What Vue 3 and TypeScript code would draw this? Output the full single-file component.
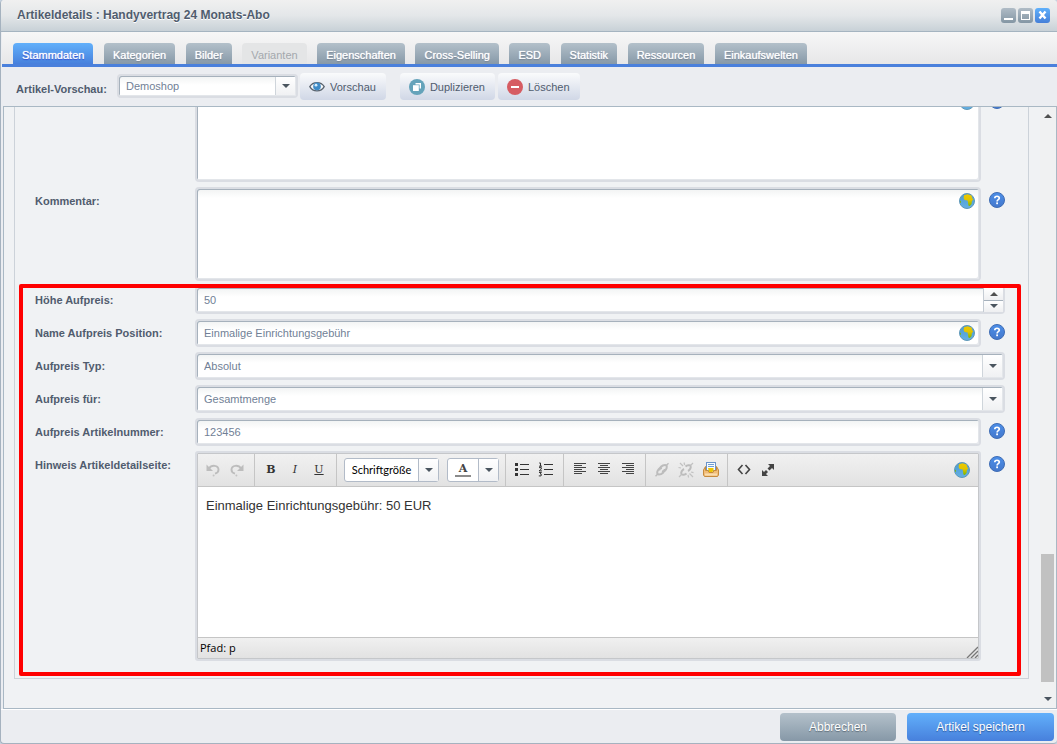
<script setup lang="ts">
import { ref } from 'vue'

interface Tab {
  name: string
  disabled?: boolean
}

const tabs: Tab[] = [
  { name: 'Stammdaten' },
  { name: 'Kategorien' },
  { name: 'Bilder' },
  { name: 'Varianten', disabled: true },
  { name: 'Eigenschaften' },
  { name: 'Cross-Selling' },
  { name: 'ESD' },
  { name: 'Statistik' },
  { name: 'Ressourcen' },
  { name: 'Einkaufswelten' },
]
const activeTab = ref('Stammdaten')

const shop = ref('Demoshop')
const description = ref('')
const comment = ref('')
const surcharge = ref('50')
const surchargeName = ref('Einmalige Einrichtungsgebühr')
const surchargeType = ref('Absolut')
const surchargeFor = ref('Gesamtmenge')
const surchargeNumber = ref('123456')

function step(delta: number) {
  surcharge.value = String(Number(surcharge.value) + delta)
}
</script>

<template>
  <div class="window">
    <svg class="defs" aria-hidden="true">
      <defs>
        <linearGradient id="sea" x1="0" y1="0" x2="0" y2="1">
          <stop offset="0" stop-color="#4a9ad0" />
          <stop offset="1" stop-color="#64b0e4" />
        </linearGradient>
        <linearGradient id="land" x1="0" y1="0" x2="0" y2="1">
          <stop offset="0" stop-color="#eec800" />
          <stop offset="0.5" stop-color="#e0c400" />
          <stop offset="1" stop-color="#7cb800" />
        </linearGradient>
        <linearGradient id="helpfill" x1="0" y1="0" x2="0" y2="1">
          <stop offset="0" stop-color="#4b8ee8" />
          <stop offset="1" stop-color="#4478cc" />
        </linearGradient>
        <symbol id="globe" viewBox="0 0 16 16">
          <circle cx="8" cy="8" r="7.5" fill="url(#sea)" stroke="#5f98b8" />
          <path d="M5 2.2 8.5 1.2 12.5 2.6 13.4 5.4 14.2 6.2 12.8 8.6 12.6 11 10.8 12.9 9.4 12.6 9 9.6 8.6 7.6 5.6 7 4.6 5z" fill="url(#land)" />
          <path d="M1 7.5 2 8.4 1.8 10 1 9.6z" fill="#7cb800" />
        </symbol>
        <symbol id="help" viewBox="0 0 16 16">
          <circle cx="8" cy="8" r="7.5" fill="url(#helpfill)" stroke="#3f6db4" />
          <path d="M5.8 6.2C5.8 3.6 10.3 3.6 10.3 6.1 10.3 7.7 8.1 7.6 8.1 9.4" fill="none" stroke="#fff" stroke-width="1.7" />
          <rect x="7.2" y="10.4" width="1.8" height="1.8" fill="#fff" />
        </symbol>
      </defs>
    </svg>

    <header class="titlebar">
      <h1>Artikeldetails : Handyvertrag 24 Monats-Abo</h1>
      <div class="tools">
        <button type="button" aria-label="Minimieren">
          <svg viewBox="0 0 15 15"><rect x="3" y="10" width="9" height="2" fill="#fff" /></svg>
        </button>
        <button type="button" aria-label="Maximieren">
          <svg viewBox="0 0 15 15"><path d="M3 3h9v9H3zM4 6v5h7V6z" fill="#fff" fill-rule="evenodd" /></svg>
        </button>
        <button type="button" class="close" aria-label="Schließen">
          <svg viewBox="0 0 15 15"><path d="M4.5 3.5l6 7M10.5 3.5l-6 7" stroke="#fff" stroke-width="2.4" fill="none" /></svg>
        </button>
      </div>
    </header>

    <nav class="tabs">
      <div class="tablist">
        <button
          v-for="tab in tabs"
          :key="tab.name"
          type="button"
          :class="{ active: tab.name === activeTab }"
          :disabled="tab.disabled"
          @click="activeTab = tab.name"
        >{{ tab.name }}</button>
      </div>
    </nav>

    <div class="toolbar">
      <label for="shop">Artikel-Vorschau:</label>
      <div class="field combo shop">
        <select id="shop" v-model="shop"><option>Demoshop</option></select>
        <span class="trigger"><i class="down"></i></span>
      </div>
      <button type="button" class="preview">
        <svg viewBox="0 0 16 16">
          <path d="M.8 7.6C4 2.2 12 2.2 15.2 7.6 12 13.2 4 13.2.8 7.6z" fill="#f6f8fa" stroke="#59636e" stroke-width="1.3" />
          <circle cx="8" cy="7.4" r="3.8" fill="#3f8cc8" />
          <circle cx="7" cy="6.2" r="1.4" fill="#d8ecfa" />
        </svg>
        Vorschau
      </button>
      <button type="button" class="spaced">
        <svg viewBox="0 0 16 16">
          <circle cx="8" cy="8" r="8" fill="#65a3ba" />
          <path d="M6.5 4h5.5v5.5h-1.4V5.4H6.5z" fill="#fff" />
          <rect x="4" y="6.2" width="5.8" height="5.8" fill="#fff" />
        </svg>
        Duplizieren
      </button>
      <button type="button">
        <svg viewBox="0 0 16 16">
          <circle cx="8" cy="8" r="8" fill="#d65c62" />
          <rect x="4" y="7" width="8" height="2" fill="#fff" />
        </svg>
        Löschen
      </button>
    </div>

    <main class="panel">
      <div class="viewport">
        <form class="fieldset" @submit.prevent>
          <div class="row">
            <label for="description"></label>
            <div class="field area">
              <textarea id="description" v-model="description" aria-label="Beschreibung"></textarea>
              <svg class="globe"><use href="#globe" /></svg>
            </div>
            <button type="button" class="help" aria-label="Hilfe"><svg><use href="#help" /></svg></button>
          </div>
          <div class="row">
            <label for="comment">Kommentar:</label>
            <div class="field area">
              <textarea id="comment" v-model="comment"></textarea>
              <svg class="globe"><use href="#globe" /></svg>
            </div>
            <button type="button" class="help" aria-label="Hilfe"><svg><use href="#help" /></svg></button>
          </div>

          <div class="surcharge">
            <div class="row">
              <label for="amount">Höhe Aufpreis:</label>
              <div class="field">
                <input id="amount" v-model="surcharge" type="text" />
                <div class="spinner">
                  <button type="button" aria-label="Erhöhen" @click="step(1)"><i class="up"></i></button>
                  <button type="button" aria-label="Verringern" @click="step(-1)"><i class="down"></i></button>
                </div>
              </div>
            </div>
            <div class="row">
              <label for="name">Name Aufpreis Position:</label>
              <div class="field">
                <input id="name" v-model="surchargeName" type="text" />
                <svg class="globe"><use href="#globe" /></svg>
              </div>
              <button type="button" class="help" aria-label="Hilfe"><svg><use href="#help" /></svg></button>
            </div>
            <div class="row">
              <label for="type">Aufpreis Typ:</label>
              <div class="field combo">
                <select id="type" v-model="surchargeType"><option>Absolut</option></select>
                <span class="trigger"><i class="down"></i></span>
              </div>
            </div>
            <div class="row">
              <label for="target">Aufpreis für:</label>
              <div class="field combo">
                <select id="target" v-model="surchargeFor"><option>Gesamtmenge</option></select>
                <span class="trigger"><i class="down"></i></span>
              </div>
            </div>
            <div class="row">
              <label for="number">Aufpreis Artikelnummer:</label>
              <div class="field"><input id="number" v-model="surchargeNumber" type="text" /></div>
              <button type="button" class="help" aria-label="Hilfe"><svg><use href="#help" /></svg></button>
            </div>
            <div class="row">
              <span id="note-label" class="label">Hinweis Artikeldetailseite:</span>
              <div class="editor">
                <div class="editbar">
                  <div class="group first">
                    <button type="button" aria-label="Rückgängig">
                      <svg viewBox="0 0 16 16"><path d="M4 6.500C6.500 2.500 13.500 3 13.500 7.800c0 2.200-1.500 3.400-3.500 3.800" fill="none" stroke="#bdbdbd" stroke-width="1.900" /><path d="M1.500 2.500v6.500H8z" fill="#bdbdbd" /><circle cx="8.600" cy="13.600" r="1" fill="#c4c4c4" /></svg>
                    </button>
                    <button type="button" aria-label="Wiederholen">
                      <svg viewBox="0 0 16 16"><path d="M12 6.500C9.500 2.500 2.500 3 2.500 7.800c0 2.200 1.500 3.400 3.500 3.800" fill="none" stroke="#bdbdbd" stroke-width="1.900" /><path d="M14.500 2.500v6.500H8z" fill="#bdbdbd" /><circle cx="7.400" cy="13.600" r="1" fill="#c4c4c4" /></svg>
                    </button>
                  </div>
                  <div class="group">
                    <button type="button" class="glyph" aria-label="Fett">B</button>
                    <button type="button" class="glyph italic" aria-label="Kursiv">I</button>
                    <button type="button" class="glyph underline" aria-label="Unterstrichen">U</button>
                  </div>
                  <div class="group lists">
                    <button type="button" class="split"><span>Schriftgröße</span><b><i class="down"></i></b></button>
                    <button type="button" class="split color" aria-label="Textfarbe"><span><em>A</em></span><b><i class="down"></i></b></button>
                  </div>
                  <div class="group">
                    <button type="button" aria-label="Aufzählung">
                      <svg viewBox="0 0 16 16"><path d="M6 2.500h9M6 7.500h9M6 12.500h9" stroke="#333" /><path d="M1 1h3v3H1zM1 6h3v3H1zM1 11h3v3H1z" fill="#333" /></svg>
                    </button>
                    <button type="button" aria-label="Nummerierung">
                      <svg viewBox="0 0 16 16"><path d="M6 2.500h9M6 7.500h9M6 12.500h9" stroke="#333" /><path d="M1.200 1h1.300v3M1 4.200h3M1 5.600h2.300v1.500L1 8.900h3M1 10.500h2.400L2.200 12l1.300.6-.5 1.300H.8" fill="none" stroke="#333" /></svg>
                    </button>
                  </div>
                  <div class="group">
                    <button type="button" aria-label="Linksbündig">
                      <svg viewBox="0 0 16 16"><path d="M2 1.500h12M2 3.500h8M2 5.500h12M2 7.500h8M2 9.500h12M2 11.500h8" stroke="#444" /></svg>
                    </button>
                    <button type="button" aria-label="Zentriert">
                      <svg viewBox="0 0 16 16"><path d="M2 1.500h12M4 3.500h8M2 5.500h12M4 7.500h8M2 9.500h12M4 11.500h8" stroke="#444" /></svg>
                    </button>
                    <button type="button" aria-label="Rechtsbündig">
                      <svg viewBox="0 0 16 16"><path d="M2 1.500h12M6 3.500h8M2 5.500h12M6 7.500h8M2 9.500h12M6 11.500h8" stroke="#444" /></svg>
                    </button>
                  </div>
                  <div class="group">
                    <button type="button" aria-label="Link einfügen">
                      <svg viewBox="0 0 16 16"><g fill="none" stroke="#bcbcbc" stroke-width="2"><path d="M5.500 8.500C5 6 8 3 11 3c2.500 0 2 3 .8 4.800C11 9.200 9.500 9.600 8 9.200" /><path d="M10.500 7C11 9.500 8 12.500 5 12.500c-2.500 0-2-3-.8-4.800C5 6.400 6.500 6 8 6.400" /></g><path d="M14.500 1.200 12.500 3.200M1.500 14.300 3.500 12.300" stroke="#bcbcbc" stroke-width="1.400" /></svg>
                    </button>
                    <button type="button" aria-label="Link entfernen">
                      <svg viewBox="0 0 16 16"><g fill="none" stroke="#bcbcbc" stroke-width="2"><path d="M7.500 4.500C9 3.200 12 2.500 12.600 4c.6 1.500-.6 4-2.600 5" /><path d="M8.500 11.500C7 12.800 4 13.500 3.400 12c-.6-1.500.6-4 2.600-5" /></g><path d="M2 1l3 3M6 .5l.7 2.500M.5 5.500 3 6M15 1l-2.500 2.500M1 15l2.500-2.500M15 15l-3.500-3.500M10 13l.6 2.500M13 10l2.500.6" stroke="#c2c2c2" stroke-width="1.200" /></svg>
                    </button>
                    <button type="button" class="media" aria-label="Medien">
                      <svg viewBox="0 0 16 16"><rect x="3.500" y=".5" width="9" height="8" fill="#f8fbff" stroke="#6b94c9" /><path d="M5 2.500h6M5 4.500h6" stroke="#6f9fd2" /><path d="M2.500 4.500.5 8v5l1 1.500h13l1-1.500V8l-2-3.500V8.500H11l-1 2H6l-1-2H2.500z" fill="#f1bd78" stroke="#c58a3e" /><path d="M5 6h5.500v2.800L9.200 10H6z" fill="#edc500" /><path d="M2 12.500h12" stroke="#f9ddb0" stroke-width="2" /></svg>
                    </button>
                  </div>
                  <div class="group last">
                    <button type="button" aria-label="Quelltext">
                      <svg viewBox="0 0 16 16"><path d="M6.500 3 2.500 7.500l4 4.500M9.500 3l4 4.500-4 4.500" fill="none" stroke="#444" stroke-width="1.600" /></svg>
                    </button>
                    <button type="button" aria-label="Vollbild">
                      <svg viewBox="0 0 16 16"><path d="M8 2h6v6l-2-2-2.500 2.500-2-2L10 4zM2 14V8l2 2 2-2 2 2-2 2 2 2z" fill="#444" /></svg>
                    </button>
                  </div>
                  <svg class="globe-inline"><use href="#globe" /></svg>
                </div>
                <div class="content" contenteditable="true" role="textbox" aria-labelledby="note-label">Einmalige Einrichtungsgebühr: 50 EUR</div>
                <div class="status">
                  <span>Pfad: p</span>
                  <svg viewBox="0 0 12 12"><path d="M1 12 12 1M5 12l7-7M9 12l3-3" stroke="#777" stroke-width="1.300" /></svg>
                </div>
              </div>
              <button type="button" class="help" aria-label="Hilfe"><svg><use href="#help" /></svg></button>
            </div>
          </div>
        </form>
      </div>
      <div class="scrollbar" aria-hidden="true">
        <i class="up"></i>
        <div class="track"><div class="thumb"></div></div>
        <i class="down"></i>
      </div>
    </main>

    <footer class="footer">
      <button type="button">Abbrechen</button>
      <button type="button" class="primary">Artikel speichern</button>
    </footer>
  </div>
</template>

<style>
body {
  background: #c6d3e0;
}
</style>

<style scoped>
* {
  box-sizing: border-box;
}
.window {
  display: flex;
  flex-direction: column;
  height: 100vh;
  border: 1px solid #a5b2bf;
  border-top: 0;
  border-right: 0;
  border-radius: 4px;
  background: #ebedf1;
  overflow: hidden;
  font: 11px/14px "Liberation Sans", Arial, sans-serif;
  color: #505c6e;
}
.defs {
  position: absolute;
  width: 0;
  height: 0;
}
button,
input,
select,
textarea {
  margin: 0;
  padding: 0;
  border: 0;
  background: none;
  font: inherit;
  color: inherit;
  outline: none;
}
button svg {
  display: block;
  width: 16px;
  height: 16px;
}
.up,
.down {
  display: block;
  width: 0;
  height: 0;
  border: 4px solid transparent;
}
.up {
  border-top: 0;
  border-bottom-color: #505050;
}
.down {
  border-bottom: 0;
  border-top-color: #4a555f;
}

.titlebar {
  display: flex;
  flex: none;
  justify-content: space-between;
  height: 32px;
  padding: 0 7px 0 16px;
  border-bottom: 1px solid #a5b4c0;
  background: linear-gradient(#f0f0f0, #e4e7e9 50%, #c8d1d7);
}
.titlebar h1 {
  margin: 0;
  font-size: 12px;
  line-height: 30px;
  text-shadow: 0 1px #fff;
}
.tools {
  display: flex;
  gap: 2px;
  padding-top: 8px;
}
.tools button {
  width: 15px;
  height: 15px;
  border-radius: 3px;
  background: linear-gradient(#b0bcc6, #8496a4);
}
.tools .close {
  background: linear-gradient(#5fb0fb, #457fd8);
}
.tools svg {
  width: 15px;
  height: 15px;
}

.tabs {
  flex: none;
  height: 35px;
  margin-left: 1px;
  padding: 11px 11px 0;
  border-bottom: 3px solid #4a80dc;
  background: linear-gradient(#f7f7f7, #e7e7e8);
}
.tablist {
  display: flex;
  justify-content: space-between;
  max-width: 794px;
}
.tabs button {
  height: 21px;
  padding: 2px 9px 0;
  border-radius: 4px 4px 0 0;
  background: linear-gradient(#b3c0ca, #8799a8);
  color: #fff;
  white-space: nowrap;
  text-shadow: 0 0 1px #fff, 0 1px 1px #667585;
}
.tabs .active {
  background: linear-gradient(#62b0fb, #4780dc);
  text-shadow: 0 0 1px #fff, 0 1px 1px #1a35c8;
}
.tabs button:disabled {
  background: #e4e5e6;
  color: #a3a8ad;
  text-shadow: none;
}

.toolbar {
  display: flex;
  flex: none;
  align-items: flex-start;
  height: 39px;
  padding: 6px 0 0 15px;
}
.toolbar label {
  width: 101px;
  padding-top: 2px;
  font-weight: bold;
  line-height: 28px;
}
.toolbar button {
  display: flex;
  align-items: center;
  gap: 5px;
  height: 27px;
  margin-left: 3px;
  padding: 0 10px 0 9px;
  border-radius: 4px;
  background: linear-gradient(#fafbfc, #d0d7e6);
}
.toolbar .preview {
  margin-left: 2px;
}
.toolbar .spaced {
  margin-left: 14px;
}

.field {
  position: relative;
  display: flex;
  flex: 1;
  min-width: 0;
  height: 28px;
  border: 2px solid #dadde3;
  border-radius: 4px;
  background: linear-gradient(#f1f3f3, #fff 9px);
  box-shadow: inset 1px 1px #a6b1bc, inset -1px -1px #e3e6ea;
  color: #717f96;
}
.field input,
.field select,
.field textarea {
  flex: 1;
  min-width: 0;
  width: 100%;
  padding: 0 7px;
  appearance: none;
  resize: none;
}
.area {
  height: 94px;
}
.shop {
  flex: none;
  width: 181px;
  height: 24px;
  margin-top: 1px;
}
.globe {
  position: absolute;
  top: 4px;
  right: 4px;
  width: 16px;
  height: 16px;
}
.trigger {
  position: absolute;
  top: 1px;
  right: 1px;
  bottom: 1px;
  display: grid;
  place-items: center;
  width: 20px;
  border-left: 1px solid #cfd5db;
  background: linear-gradient(#fff, #f0f1f3);
  pointer-events: none;
}
.spinner {
  display: flex;
  flex-direction: column;
  gap: 1px;
  width: 20px;
  border-left: 1px solid #c5ccd4;
  background: #a6b1bc;
}
.spinner button {
  display: grid;
  flex: 1;
  place-items: center;
  background: linear-gradient(#fff, #eeeff1);
}

.panel {
  display: flex;
  flex: 1;
  min-height: 0;
  margin-left: 2px;
  border: 1px solid #a9b8c4;
  background: #f0f2f4;
}
.viewport {
  display: flex;
  flex: 1;
  flex-direction: column;
  justify-content: flex-end;
  min-width: 0;
  overflow: hidden;
}
.fieldset {
  display: flex;
  flex: none;
  flex-direction: column;
  gap: 5px;
  margin: 0 11px 29px 10px;
  padding: 0 23px 17px 20px;
  border: 1px solid #ccd2d9;
}
.surcharge {
  position: relative;
  display: flex;
  flex-direction: column;
  gap: 5px;
}
.surcharge::after {
  content: "";
  position: absolute;
  inset: -2px -16px -15px;
  border: 4px solid #f00;
  border-radius: 2px;
  pointer-events: none;
}
.row {
  display: flex;
  align-items: flex-start;
}
.row > label,
.label {
  flex: none;
  width: 160px;
  font-weight: bold;
  line-height: 28px;
}
.help {
  flex: none;
  margin: 5px 0 0 8px;
}

.editor {
  flex: 1;
  min-width: 0;
  border: 2px solid #dadde3;
  border-radius: 3px;
  background: #fff;
  box-shadow: inset 0 0 0 1px #c5c7ca;
  padding: 1px;
}
.editbar {
  display: flex;
  height: 33px;
  border-bottom: 1px solid #c5c5c5;
  background: linear-gradient(#f1f1f1, #e2e2e2);
}
.group {
  display: flex;
  align-items: center;
  padding: 0 5px 0 4px;
  border-right: 1px solid #c5c5c5;
}
.first {
  padding-left: 3px;
}
.last {
  border-right: 0;
}
.group button {
  display: grid;
  place-items: center;
  width: 24px;
  height: 24px;
}
.group .media {
  margin-left: 1px;
  width: 23px;
}
.group .glyph {
  font: bold 11px/14px "DejaVu Serif", "Liberation Serif", serif;
  color: #333;
}
.group .italic {
  font-weight: normal;
  font-style: italic;
}
.group .underline {
  font-weight: normal;
  text-decoration: underline;
}
.lists {
  gap: 8px;
  padding: 0 6px 0 7px;
}
.group .split {
  display: flex;
  width: 95px;
  border: 1px solid #b2bbc8;
  border-radius: 3px;
  background: #fff;
  color: #000;
  font-family: Lato, "Open Sans", sans-serif;
}
.group .color {
  width: 52px;
}
.split span {
  display: grid;
  flex: 1;
  place-items: center;
  align-self: stretch;
}
.split b {
  display: grid;
  place-items: center;
  align-self: stretch;
  width: 20px;
  border-left: 1px solid #b2bbc8;
  background: linear-gradient(#fff, #f0f1f3);
}
.split em {
  width: 16px;
  border-bottom: 2px solid #8b8b8b;
  font: bold 11px/12px "DejaVu Serif", "Liberation Serif", serif;
  color: #444;
  text-align: center;
}
.globe-inline {
  width: 16px;
  height: 16px;
  margin: 8px 8px 0 auto;
}
.content {
  height: 150px;
  padding: 10px 8px;
  font-size: 13px;
  line-height: 18px;
  color: #333;
  outline: none;
}
.status {
  display: flex;
  align-items: flex-end;
  justify-content: space-between;
  height: 21px;
  border-top: 1px solid #c5c5c5;
  background: linear-gradient(#f0f0f0, #e2e2e2);
  font-family: "Open Sans", "Noto Sans", sans-serif;
  color: #000;
}
.status span {
  padding-left: 2px;
  line-height: 20px;
}
.status svg {
  width: 12px;
  height: 12px;
}

.scrollbar {
  display: flex;
  flex: none;
  flex-direction: column;
  align-items: center;
  width: 16px;
  padding: 7px 2px 7px 1px;
  background: #f0f1f2;
}
.track {
  display: flex;
  flex: 1;
  align-items: flex-end;
  align-self: stretch;
  padding-bottom: 15px;
}
.thumb {
  width: 100%;
  height: 128px;
  background: #c1c1c1;
}

.footer {
  display: flex;
  flex: none;
  justify-content: flex-end;
  gap: 11px;
  height: 34px;
  padding: 3px 3px 0 0;
  border-top: 1px solid #fff;
}
.footer button {
  width: 116px;
  height: 28px;
  border-radius: 4px;
  background: linear-gradient(#b4c1cb, #8698a7);
  color: #fff;
  font-size: 12px;
  text-shadow: 0 1px 1px #5d6b78;
}
.footer .primary {
  width: 147px;
  background: linear-gradient(#62b0fb, #4780dc);
  text-shadow: 0 1px 1px #2e5a9e;
}
</style>
